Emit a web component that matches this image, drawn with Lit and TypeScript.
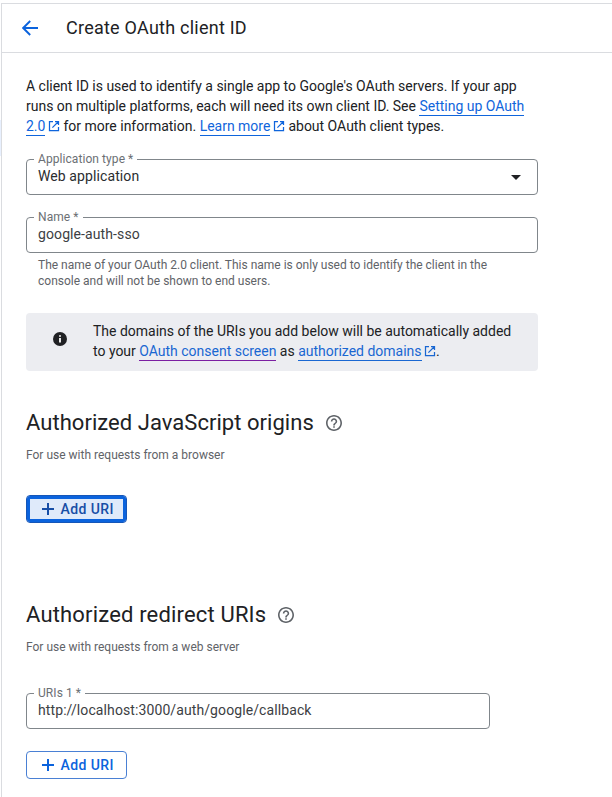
import { LitElement, html, svg, css } from "lit";
import { customElement, property } from "lit/decorators.js";

const openIcon = html`<svg class="open" viewBox="0 0 12 12" width="12" height="12" aria-hidden="true">
  ${svg`<path d="M5 1.5H1.5V10.5H10.5V7M7 1.5H10.5V5M10.5 1.5L4.4 7.6" fill="none" stroke="currentColor" stroke-width="1.25"/>`}
</svg>`;

@customElement("outlined-field")
export class OutlinedField extends LitElement {
  @property() label = "";
  @property() value = "";
  @property({ type: Boolean }) select = false;

  static styles = css`
    :host { display: flow-root; height: 36px; }
    fieldset {
      box-sizing: border-box; margin: -7px 0 0; height: 43px; min-width: 0;
      border: 1px solid #80868b; border-radius: 4px; padding: 0 16px 0 11px;
      display: block;
    }
    legend {
      margin-left: -4px; padding: 0 4px; height: 15px;
      font-size: 12px; line-height: 15px; letter-spacing: 0.07px; color: #6b6f74;
    }
    .row { display: flex; align-items: center; justify-content: space-between; height: 20px; }
    .value { font-size: 14px; line-height: 20px; letter-spacing: 0.1px; color: #3c4043; margin-top: -2px; }
    :host([select]) .value { color: #2b2d30; }
  `;

  render() {
    return html`<fieldset>
      <legend>${this.label}</legend>
      <div class="row">
        <span class="value">${this.value}</span>
        ${this.select
          ? html`<svg width="10" height="5" viewBox="0 0 10 5"><path d="M0 0H10L5 5Z" fill="#202124" /></svg>`
          : ""}
      </div>
    </fieldset>`;
  }
}

@customElement("add-button")
export class AddButton extends LitElement {
  static styles = css`
    :host { display: block; }
    button {
      box-sizing: border-box; width: 101px; height: 28px; padding: 0 0 0 15px;
      display: flex; align-items: center; gap: 6.5px;
      background: #fff; color: #0b63dd; border: 1px solid #4a80d4; border-radius: 4px;
      font: 500 14px/20px Roboto, sans-serif; letter-spacing: 0.4px; white-space: nowrap;
    }
    svg { display: block; }
    :host([focused]) button {
      background: #dfeafa; color: #174ea6; border-color: #1556b8;
      box-shadow: inset 0 0 0 3px #0b63dd;
    }
  `;

  render() {
    return html`<button>
      <svg width="12" height="12" viewBox="0 0 12 12"><path d="M6 0V12M0 6H12" stroke="currentColor" stroke-width="2" /></svg>
      <span>Add URI</span>
    </button>`;
  }
}

@customElement("section-title")
export class SectionTitle extends LitElement {
  @property() heading = "";
  @property() note = "";

  static styles = css`
    :host { display: block; }
    .title { display: flex; align-items: center; gap: 12px; height: 32px; }
    h2 { margin: 0; font: 400 22px/32px Roboto, sans-serif; color: #202124; white-space: nowrap; }
    :host(.origins) h2 { width: 288px; letter-spacing: 0.04px; }
    :host(.redirects) h2 { width: 240px; letter-spacing: 0.17px; }
    svg { display: block; }
    p { margin: 8px 0 0; font-size: 12px; line-height: 16px; color: #5f6368; }
  `;

  render() {
    return html`<div class="title">
        <h2>${this.heading}</h2>
        <svg width="16" height="16" viewBox="2 2 20 20" fill="#5f6368">
          <path d="M11 18h2v-2h-2v2zm1-16C6.48 2 2 6.48 2 12s4.48 10 10 10 10-4.48 10-10S17.52 2 12 2zm0 18c-4.41 0-8-3.59-8-8s3.59-8 8-8 8 3.59 8 8-3.59 8-8 8zm0-14c-2.21 0-4 1.79-4 4h2c0-1.1.9-2 2-2s2 .9 2 2c0 2-3 1.75-3 5h2c0-2.25 3-2.5 3-5 0-2.21-1.79-4-4-4z" />
        </svg>
      </div>
      <p>${this.note}</p>`;
  }
}

@customElement("app-root")
export class AppRoot extends LitElement {
  static styles = css`
    :host {
      display: flex; box-sizing: border-box; height: 797px; padding-top: 3px; overflow: hidden;
      background: #fff; color: #202124; font-family: Roboto, sans-serif;
    }
    .rail { flex: none; width: 1px; padding-top: 117px; }
    .marker { height: 36px; background: #e8f0fe; }
    .page { flex: 1; border-left: 1px solid #dadce0; border-top: 1px solid #dadce0; }
    header {
      display: flex; align-items: center; height: 48px; padding-left: 20px; gap: 27px;
      border-bottom: 1px solid #dadce0;
    }
    header svg { display: block; }
    h1 { margin: 0; font: 400 18px/24px Roboto, sans-serif; letter-spacing: 0.24px; white-space: nowrap; }
    main { width: 512px; padding: 23px 0 0 24px; }
    .intro {
      margin: 0 0 23px; font-size: 14px; line-height: 20px; letter-spacing: -0.008px; white-space: nowrap;
      --link: #0f65dc;
    }
    a { color: var(--link); text-decoration: none; border-bottom: 1px solid var(--link); padding-bottom: 1px; }
    a.visited { border-color: #7b1fa2; }
    .open { color: var(--link); vertical-align: -1px; margin-left: 2.6px; }
    .name { margin-top: 22px; }
    .hint { margin: 4px 0 0 12px; font-size: 12px; line-height: 16px; color: #5f6368; white-space: nowrap; }
    .info {
      display: flex; box-sizing: border-box; height: 58px; margin-top: 24px; padding: 8px 0 0 27px; gap: 26px;
      background: #ecedf1; border-radius: 4px; font-size: 14px; line-height: 20px; letter-spacing: -0.008px; white-space: nowrap;
      --link: #1967d2;
    }
    .info svg.badge { display: block; margin-top: 11px; }
    section-title.origins { margin-top: 36px; }
    section-title.redirects { margin-top: 76px; }
    add-button { margin-top: 32px; }
    .uri { width: 464px; margin-top: 38px; }
    .uri + add-button { margin-top: 22px; }
  `;

  render() {
    return html`
      <div class="rail"><div class="marker"></div></div>
      <div class="page">
        <header>
          <svg width="17" height="16" viewBox="0 0 17 16"><path d="M16 8H2M8.2 1L1.2 8L8.2 15" fill="none" stroke="#0b63dd" stroke-width="1.9" /></svg>
          <h1>Create OAuth client ID</h1>
        </header>
        <main>
          <p class="intro">A client ID is used to identify a single app to Google's OAuth servers. If your app<br />runs on multiple platforms, each will need its own client ID. See <a>Setting up OAuth</a><br /><a>2.0</a>${openIcon} for more information. <a>Learn more</a>${openIcon} about OAuth client types.</p>
          <outlined-field label="Application type *" value="Web application" select></outlined-field>
          <outlined-field class="name" label="Name *" value="google-auth-sso"></outlined-field>
          <p class="hint">The name of your OAuth 2.0 client. This name is only used to identify the client in the<br />console and will not be shown to end users.</p>
          <div class="info">
            <svg class="badge" width="14" height="14" viewBox="0 0 14 14"><circle cx="7" cy="7" r="7" fill="#202124" /><path d="M7 6V10.5M7 3.2V4.8" stroke="#fff" stroke-width="1.8" /></svg>
            <div>The domains of the URIs you add below will be automatically added<br />to your <a class="visited">OAuth consent screen</a> as <a>authorized domains</a>${openIcon}.</div>
          </div>
          <section-title class="origins" heading="Authorized JavaScript origins" note="For use with requests from a browser"></section-title>
          <add-button focused></add-button>
          <section-title class="redirects" heading="Authorized redirect URIs" note="For use with requests from a web server"></section-title>
          <outlined-field class="uri" label="URIs 1 *" value="http://localhost:3000/auth/google/callback"></outlined-field>
          <add-button></add-button>
        </main>
      </div>
    `;
  }
}
